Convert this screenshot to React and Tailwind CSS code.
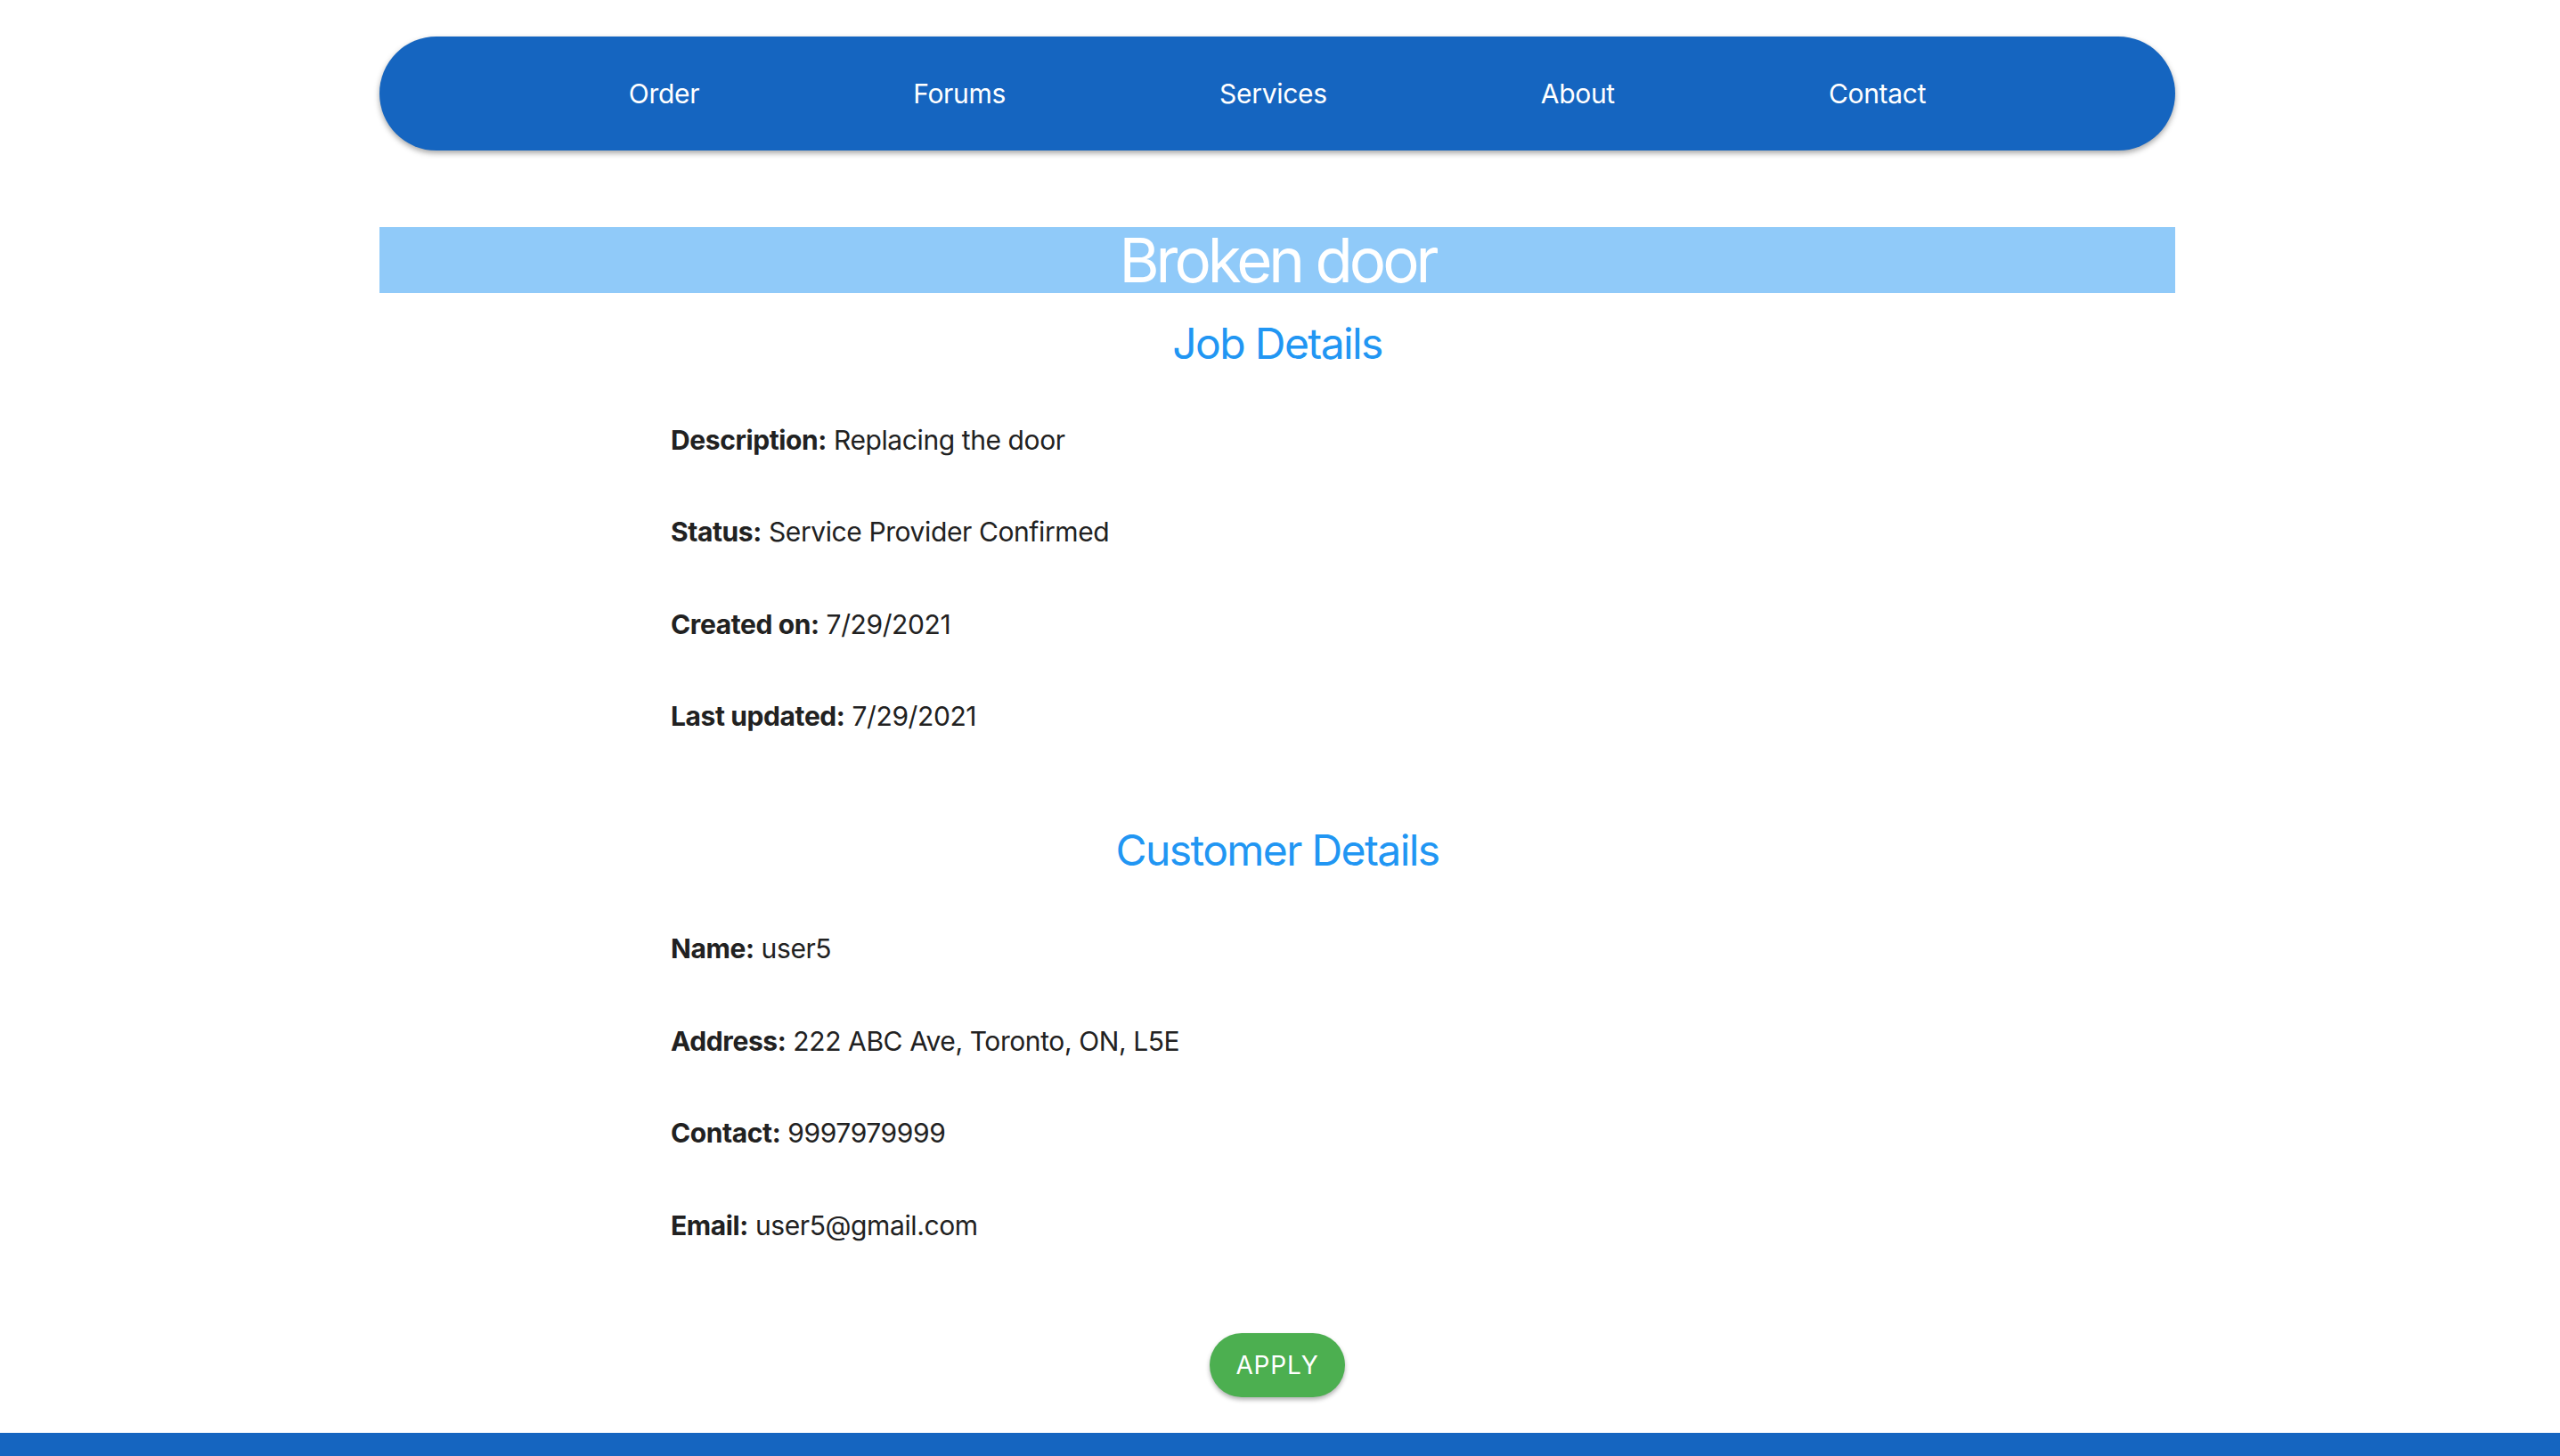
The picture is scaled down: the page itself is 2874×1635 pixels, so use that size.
import React from "react";

function Row({ label, value }) {
  return (
    <div className="h-[48px] text-[30px] leading-[48px] tracking-[-0.4px] text-[#212121]">
      <span className="font-bold">{label}</span> {value}
    </div>
  );
}

export default function App() {
  const nav = ["Order", "Forums", "Services", "About", "Contact"];
  return (
    <div className="min-h-[1635px] bg-white flex flex-col font-['Inter',sans-serif]">
      <div className="pr-[6px] flex flex-col">
        <div className="w-[2016px] mx-auto pt-[41px]">
          <nav className="h-[128px] rounded-full bg-[#1565c0] shadow-[0_3px_6px_rgba(0,0,0,0.35)] flex items-center justify-center gap-[240px]">
            {nav.map((n) => (
              <span key={n} className="text-white text-[30px] leading-none tracking-[-0.3px]">
                {n}
              </span>
            ))}
          </nav>
          <div className="mt-[86px] h-[74px] bg-[#90caf9] flex justify-center">
            <h1 className="text-white text-[69px] leading-[74px] font-normal tracking-[-4px]">Broken door</h1>
          </div>
        </div>

        <div className="w-[1362px] mx-auto flex flex-col">
          <h2 className="mt-[27.5px] h-[58px] text-center text-[48px] leading-[58px] text-[#2196f3] font-normal tracking-[-1.6px]">
            Job Details
          </h2>
          <div className="mt-[55.5px] flex flex-col gap-[55.33px]">
            <Row label="Description:" value="Replacing the door" />
            <Row label="Status:" value="Service Provider Confirmed" />
            <Row label="Created on:" value="7/29/2021" />
            <Row label="Last updated:" value="7/29/2021" />
          </div>
          <h2 className="mt-[98.5px] h-[58px] text-center text-[48px] leading-[58px] text-[#2196f3] font-normal tracking-[-1.6px]">
            Customer Details
          </h2>
          <div className="mt-[56.5px] flex flex-col gap-[55.67px]">
            <Row label="Name:" value="user5" />
            <Row label="Address:" value="222 ABC Ave, Toronto, ON, L5E" />
            <Row label="Contact:" value="9997979999" />
            <Row label="Email:" value="user5@gmail.com" />
          </div>
          <div className="mt-[97px] flex justify-center">
            <button className="h-[72px] w-[152px] rounded-full bg-[#4caf50] text-white text-[28px] tracking-[0.8px] uppercase shadow-[0_3px_5px_rgba(0,0,0,0.3)]">
              Apply
            </button>
          </div>
        </div>
      </div>
      <div className="mt-[40px] h-[26px] bg-[#1565c0]" />
    </div>
  );
}
